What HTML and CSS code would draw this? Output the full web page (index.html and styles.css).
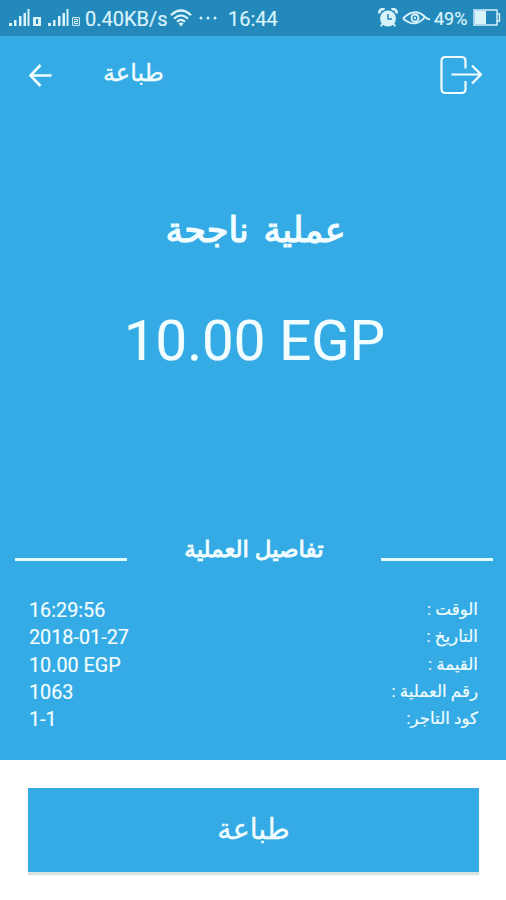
FILE: index.html
```html
<!DOCTYPE html>
<html lang="ar">
<head>
    <meta charset="UTF-8">
    <meta name="viewport" content="width=device-width, initial-scale=1.0">
    <title>طباعة</title>
    <link rel="stylesheet" href="styles.css">
</head>
<body>

    <!-- Status bar -->
    <div class="status-bar">
        <svg class="signals" width="72" height="20" viewBox="0 0 72 20" fill="currentColor">
            <path d="M1 15h3v3H1zM6 12h2.500v6H6zM11 8h2.500v10H11zM15.500 5h2.500v13h-2.500zM19.500 1h2v17h-2z"/>
            <path fill-rule="evenodd" d="M25 9h8v9h-8zM28 11v5h2v-5z"/>
            <path d="M40 15h3v3h-3zM45 12h2.500v6H45zM50 8h2.500v10H50zM54.500 5h2.500v13h-2.500zM58.500 1h2v17h-2z"/>
            <path d="M64.600 9.600h6.800v7.800h-6.800zM66 11.500h3.500v2h-3v2h3.500" fill="none" stroke="currentColor" stroke-width="1"/>
        </svg>
        <span class="speed">0.40KB/s</span>
        <svg class="wifi" width="22" height="18" viewBox="0 0 22 18" fill="none" stroke="currentColor" stroke-width="2.200">
            <path d="M1 6.200Q11-3.200 21 6.200M4 9.600q7-6.600 14 0M7 12.700q4-3.800 8 0"/>
            <path d="M8.500 14.500Q11 12.400 13.500 14.500L11 17.500z" fill="currentColor" stroke="none"/>
        </svg>
        <svg class="dots" width="18" height="4" viewBox="0 0 18 4" fill="currentColor">
            <circle cx="2" cy="2" r="1.500"/>
            <circle cx="9" cy="2" r="1.500"/>
            <circle cx="16" cy="2" r="1.500"/>
        </svg>
        <span class="clock">16:44</span>
        <svg class="alarm" width="20" height="20" viewBox="0 0 20 20">
            <path d="M1.500 5.500a3.500 3.500 0 0 1 5-4M13.500 1.500a3.500 3.500 0 0 1 5 4" fill="none" stroke="currentColor" stroke-width="2.600"/>
            <circle cx="10" cy="10.500" r="8" fill="currentColor"/>
            <path d="M4 16l-1 2.500M16 16l1 2.500" stroke="currentColor" stroke-width="2"/>
            <path d="M10 6v5h4" fill="none" stroke="#2389bb" stroke-width="1.500"/>
        </svg>
        <svg class="eye" width="29" height="14" viewBox="0 0 29 14" fill="none" stroke="currentColor" stroke-width="1.900">
            <path d="M1 7.500Q13-4 23 6q2 2 5 2.500M1 7.500Q13 18 23 6"/>
            <circle cx="13" cy="7" r="3.500"/>
            <circle cx="13" cy="7" r="1.200" fill="currentColor" stroke="none"/>
        </svg>
        <span class="percent">49%</span>
        <svg class="battery" width="28" height="18" viewBox="0 0 28 18">
            <path d="M1 1h23v15H1zM24 5h2.500v7H24" fill="none" stroke="currentColor" stroke-width="1.400"/>
            <path d="M2 2h11v13H2z" fill="currentColor"/>
        </svg>
    </div>

    <!-- Header -->
    <div class="header">
        <svg class="back" width="24" height="24" viewBox="0 0 24 24" fill="none" stroke="currentColor" stroke-width="2.600">
            <path d="M23.500 12.500H2.500M12.500 2L2.500 12.500l10 10.500"/>
        </svg>
        <h1 dir="rtl">طباعة</h1>
        <svg class="logout" width="44" height="40" viewBox="0 0 44 40" fill="none" stroke="currentColor" stroke-width="2.200">
            <path d="M26.500 13.500V6q0-4-4-4H6.500Q2.500 2 2.500 6v28q0 4 4 4h16q4 0 4-4v-8"/>
            <path d="M12.500 19.500H42M33 10.500l9 9-9 9"/>
        </svg>
    </div>

    <!-- Result -->
    <div class="result">
        <h2 dir="rtl">عملية ناجحة</h2>
        <p class="amount">10.00 EGP</p>
    </div>

    <!-- Details -->
    <div class="details">
        <div class="details-title">
            <span class="line"></span>
            <h3 dir="rtl">تفاصيل العملية</h3>
            <span class="line"></span>
        </div>
        <div class="row"><span>16:29:56</span><span class="label" dir="rtl">الوقت :</span></div>
        <div class="row"><span>2018-01-27</span><span class="label" dir="rtl">التاريخ :</span></div>
        <div class="row"><span>10.00 EGP</span><span class="label" dir="rtl">القيمة :</span></div>
        <div class="row"><span>1063</span><span class="label" dir="rtl">رقم العملية :</span></div>
        <div class="row"><span>1-1</span><span class="label" dir="rtl">كود التاجر:</span></div>
    </div>

    <!-- Print button -->
    <div class="footer">
        <button class="print" dir="rtl">طباعة</button>
    </div>

</body>
</html>
```
FILE: styles.css
```css
/* General Styling */
* {
    box-sizing: border-box;
}

body {
    display: flex;
    flex-direction: column;
    height: 900px;
    margin: 0;
    overflow: hidden;
    background: #34abe4;
    color: #f2fdff;
    font-family: Roboto, "DejaVu Sans", sans-serif;
}

h1, h2, h3, p {
    margin: 0;
    white-space: nowrap;
}

svg {
    flex: none;
    display: block;
}

/* Status Bar */
.status-bar {
    display: flex;
    align-items: center;
    height: 36px;
    padding: 0 5px 0 8px;
    background: #2389bb;
    color: #d9f3fb;
    font-size: 20px;
    -webkit-text-stroke: 0.2px;
}

.speed {
    width: 84px;
    margin-left: 5px;
    padding-top: 2px;
}

.wifi {
    margin-left: 1px;
}

.dots {
    margin-left: 7px;
}

.clock {
    margin-left: 11px;
    padding-top: 2px;
}

.alarm {
    margin-left: auto;
}

.eye {
    margin-left: 4px;
}

.percent {
    width: 36px;
    margin-left: 3px;
    font-size: 18px;
}

.battery {
    margin-left: 3px;
}

/* Header */
.header {
    display: flex;
    align-items: center;
    height: 78px;
    padding: 0 23px 0 28px;
}

.header h1 {
    margin-left: 51px;
    padding-bottom: 5px;
    font-size: 24px;
    font-weight: normal;
    -webkit-text-stroke: 0.3px;
}

.logout {
    margin-left: auto;
}

/* Result */
.result {
    height: 415px;
    padding-top: 92px;
    text-align: center;
}

.result h2 {
    height: 50px;
    padding-left: 5px;
    font-size: 35px;
    font-weight: normal;
    line-height: 50px;
    word-spacing: 6px;
    -webkit-text-stroke: 1.2px;
}

.amount {
    margin-top: 50px;
    padding-left: 3px;
    font-size: 56.3px;
    line-height: 70px;
    -webkit-text-stroke: 0.2px;
}

/* Details */
.details {
    flex: 1;
}

.details-title {
    display: flex;
    align-items: center;
    justify-content: space-between;
    height: 44px;
    margin-bottom: 24px;
    padding: 0 13px 0 15px;
}

.details-title h3 {
    padding-bottom: 4px;
    font-size: 23px;
    font-weight: normal;
    -webkit-text-stroke: 0.9px;
}

.line {
    width: 112px;
    height: 3px;
    margin-top: 16px;
    background: #e6fbff;
}

.row {
    display: flex;
    justify-content: space-between;
    height: 27.25px;
    padding: 0 28px 0 29px;
    font-size: 19.8px;
    line-height: 28px;
    -webkit-text-stroke: 0.2px;
}

.label {
    font-size: 16.7px;
    line-height: 26px;
}

/* Print Button */
.footer {
    height: 140px;
    padding: 28px 27px 0 28px;
    background: #fff;
}

.print {
    display: block;
    width: 100%;
    height: 84px;
    padding: 0 0 1px;
    border: none;
    background: #34abe4;
    box-shadow: 0 3px 1px #dadfe1;
    color: #f2fdff;
    font-family: Roboto, "DejaVu Sans", sans-serif;
    font-size: 28.5px;
    -webkit-text-stroke: 0.3px;
}
```
